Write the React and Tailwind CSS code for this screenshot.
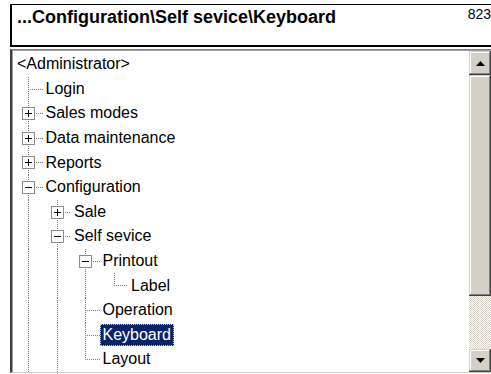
import React from "react";

const CELL_W = 28.5;
const ROW_H = 24.6;

const rows = [
  { label: "<Administrator>", cells: [] },
  { label: "Login", cells: ["tee"] },
  { label: "Sales modes", cells: ["tee"], box: "plus" },
  { label: "Data maintenance", cells: ["tee"], box: "plus" },
  { label: "Reports", cells: ["tee"], box: "plus" },
  { label: "Configuration", cells: ["tee"], box: "minus" },
  { label: "Sale", cells: ["pass", "tee"], box: "plus" },
  { label: "Self sevice", cells: ["pass", "tee"], box: "minus" },
  { label: "Printout", cells: ["pass", "pass", "tee"], box: "minus" },
  { label: "Label", cells: ["pass", "pass", "pass", "ell"] },
  { label: "Operation", cells: ["pass", "pass", "tee"] },
  { label: "Keyboard", cells: ["pass", "pass", "tee"], selected: true },
  { label: "Layout", cells: ["pass", "pass", "ell"] },
];

function Cell({ kind, box }) {
  const cx = CELL_W / 2;
  const cy = ROW_H / 2;
  const dot = { stroke: "#7a7a7a", strokeWidth: 1, strokeDasharray: "1 1" };
  return (
    <svg width={CELL_W} height={ROW_H} className="shrink-0" shapeRendering="crispEdges">
      {kind === "pass" && <line x1={cx} y1={0} x2={cx} y2={ROW_H} {...dot} />}
      {kind === "tee" && !box && <line x1={cx} y1={0} x2={cx} y2={ROW_H} {...dot} />}
      {kind === "tee" && box && (
        <>
          <line x1={cx} y1={0} x2={cx} y2={cy - 6} {...dot} />
          <line x1={cx} y1={cy + 6} x2={cx} y2={ROW_H} {...dot} />
        </>
      )}
      {kind === "ell" && <line x1={cx} y1={0} x2={cx} y2={cy} {...dot} />}
      {(kind === "tee" || kind === "ell") && (
        <line x1={box ? cx + 6 : cx} y1={cy} x2={CELL_W} y2={cy} {...dot} />
      )}
      {box && (
        <g>
          <rect x={cx - 6} y={cy - 6} width={12} height={12} fill="#fff" stroke="#8c8c8c" />
          <line x1={cx - 3.5} y1={cy} x2={cx + 3.5} y2={cy} stroke="#000" strokeWidth={1.3} />
          {box === "plus" && (
            <line x1={cx} y1={cy - 3.5} x2={cx} y2={cy + 3.5} stroke="#000" strokeWidth={1.3} />
          )}
        </g>
      )}
    </svg>
  );
}

function TreeRow({ row }) {
  return (
    <div className="flex items-center h-[24.6px]">
      {row.cells.map((c, i) => (
        <Cell key={i} kind={c} box={i === row.cells.length - 1 ? row.box : null} />
      ))}
      <span
        className={`h-[22px] flex items-center px-[2px] border whitespace-nowrap ${
          row.selected
            ? "bg-[#0a246a] text-white border-dotted border-[#e6d27a]"
            : "border-transparent text-black"
        }`}
      >
        {row.label}
      </span>
    </div>
  );
}

function Arrow({ up }) {
  return (
    <svg width="9" height="5" viewBox="0 0 9 5">
      <path d={up ? "M4.5 0 L9 5 L0 5 Z" : "M0 0 L9 0 L4.5 5 Z"} fill="#000" />
    </svg>
  );
}

const bevel =
  "bg-[#d4d0c8] shadow-[inset_-1px_-1px_#404040,inset_1px_1px_#d4d0c8,inset_-2px_-2px_#808080,inset_2px_2px_#ffffff]";

export default function App() {
  return (
    <div className="w-[491px] h-[374px] bg-white overflow-hidden pt-[4px] pl-[10px] font-['Liberation_Sans',Arial,sans-serif]">
      <div className="h-[43px] border-t border-l-2 border-b-2 border-black flex justify-between">
        <div className="pl-[5px] pt-[2px] text-[18px] leading-[21px] font-bold text-black">
          ...Configuration\Self sevice\Keyboard
        </div>
        <div className="pt-[1px] text-[14px] leading-[16px] text-black">823</div>
      </div>

      <div className="mt-[2px] h-[324px] flex border-t border-l-2 border-b border-t-[#808080] border-l-[#404040] border-b-[#d4d0c8] shadow-[inset_1px_1px_#a0a0a0]">
        <div className="flex-1 pl-[2px] pt-[2px] text-[16px] overflow-hidden">
          {rows.map((r, i) => (
            <TreeRow key={i} row={r} />
          ))}
        </div>
        <div className="w-[22px] flex flex-col pt-[1px]">
          <div className={`h-[24px] flex items-center justify-center ${bevel}`}>
            <Arrow up />
          </div>
          <div className={`h-[221px] ${bevel}`} />
          <div className="flex-1 bg-[repeating-conic-gradient(#d4d0c8_0_25%,#ffffff_0_50%)] bg-[length:2px_2px]" />
          <div className={`h-[23px] flex items-center justify-center ${bevel}`}>
            <Arrow />
          </div>
        </div>
      </div>
    </div>
  );
}
